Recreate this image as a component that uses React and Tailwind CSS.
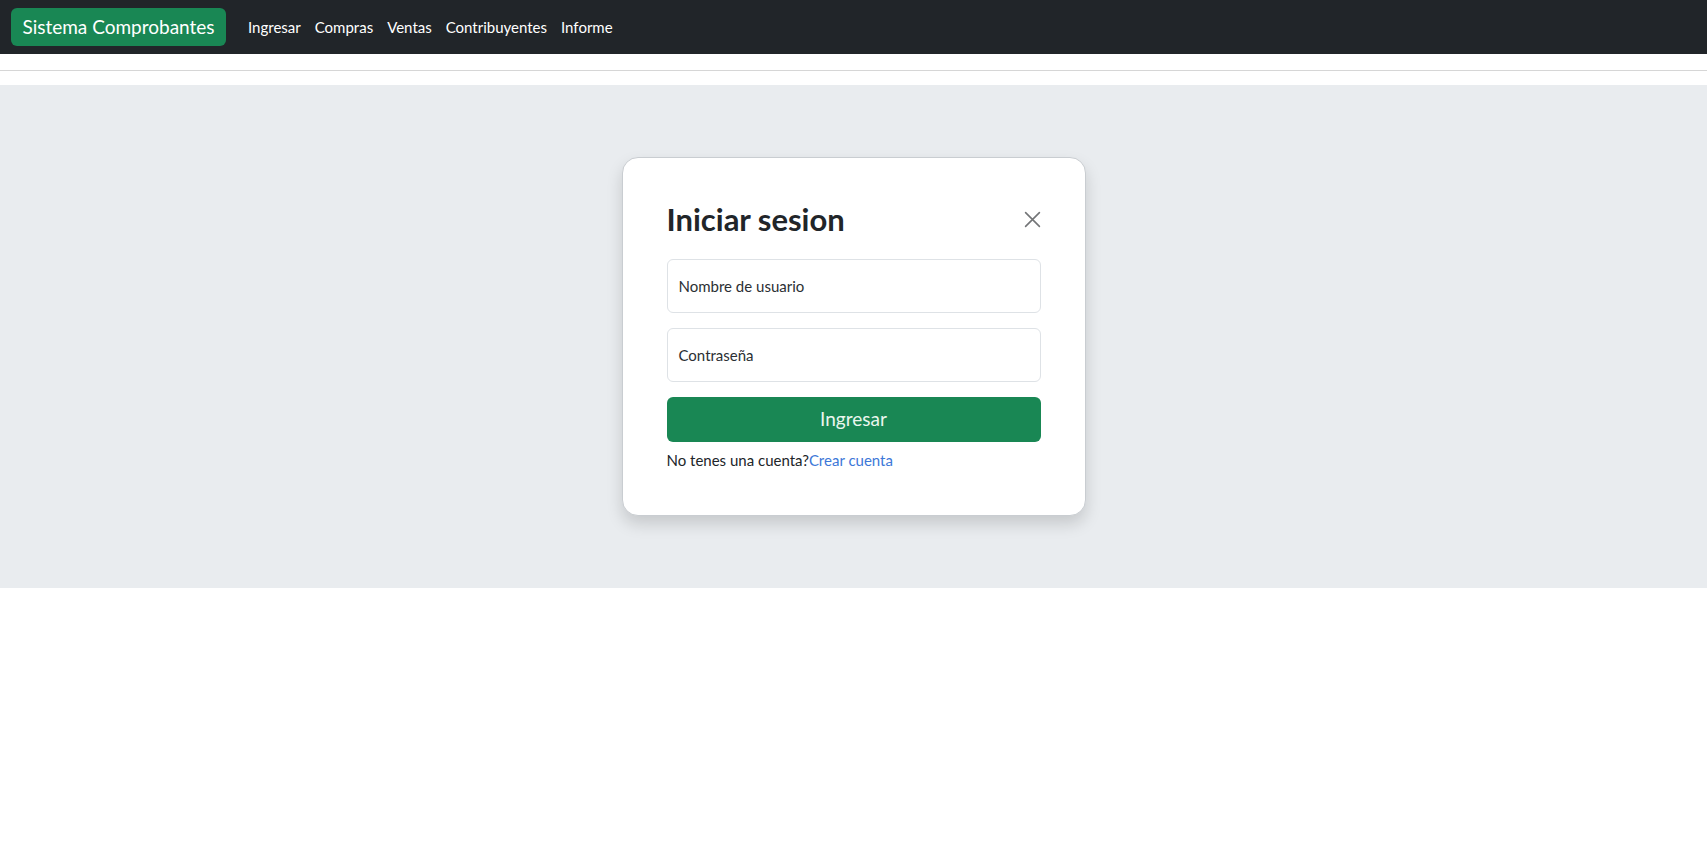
export default function App() {
  const font = { fontFamily: 'Lato, "Noto Sans", sans-serif' };
  return (
    <div className="min-h-screen bg-white text-[#212529]" style={font}>
      <nav className="h-[54px] bg-[#212529] flex items-center pl-[11px]">
        <a className="h-[38px] w-[215px] flex items-center justify-center rounded-[6px] bg-[#198754] text-white text-[19px]">
          Sistema Comprobantes
        </a>
        <ul className="flex items-center ml-[22px] gap-[14px] text-[15px] text-white">
          <li>Ingresar</li>
          <li>Compras</li>
          <li>Ventas</li>
          <li>Contribuyentes</li>
          <li>Informe</li>
        </ul>
      </nav>
      <div className="mt-[16px] h-px bg-[#d6d6d6]"></div>
      <section className="mt-[14px] bg-[#e9ecef] py-[72px] flex justify-center">
        <div className="w-[464px] h-[359px] bg-white border border-[#c9cdd1] rounded-[16px] shadow-[0_8px_16px_rgba(0,0,0,0.15)] px-[44px] pt-[42px]">
          <div className="flex items-center justify-between">
            <h2 className="text-[31px] font-bold leading-[38px] text-[#212529]">Iniciar sesion</h2>
            <svg width="17" height="17" viewBox="0 0 16 16">
              <path d="M1.5 1.5 L14.5 14.5 M14.5 1.5 L1.5 14.5" stroke="#737577" strokeWidth="1.5" strokeLinecap="round" />
            </svg>
          </div>
          <div className="mt-[21px] h-[54px] rounded-[6px] border border-[#dee2e6] flex items-center px-[11px] text-[15px] text-[#2b2f33]">
            Nombre de usuario
          </div>
          <div className="mt-[15px] h-[54px] rounded-[6px] border border-[#dee2e6] flex items-center px-[11px] text-[15px] text-[#2b2f33]">
            Contraseña
          </div>
          <button className="mt-[15px] w-full h-[45px] rounded-[6px] bg-[#198754] text-[19px] text-[#eaf6ee] flex items-center justify-center">
            Ingresar
          </button>
          <p className="mt-[6px] text-[15px] leading-[24px] text-[#212529]">
            No tenes una cuenta?<a className="text-[#3d78d8]">Crear cuenta</a>
          </p>
        </div>
      </section>
    </div>
  );
}
